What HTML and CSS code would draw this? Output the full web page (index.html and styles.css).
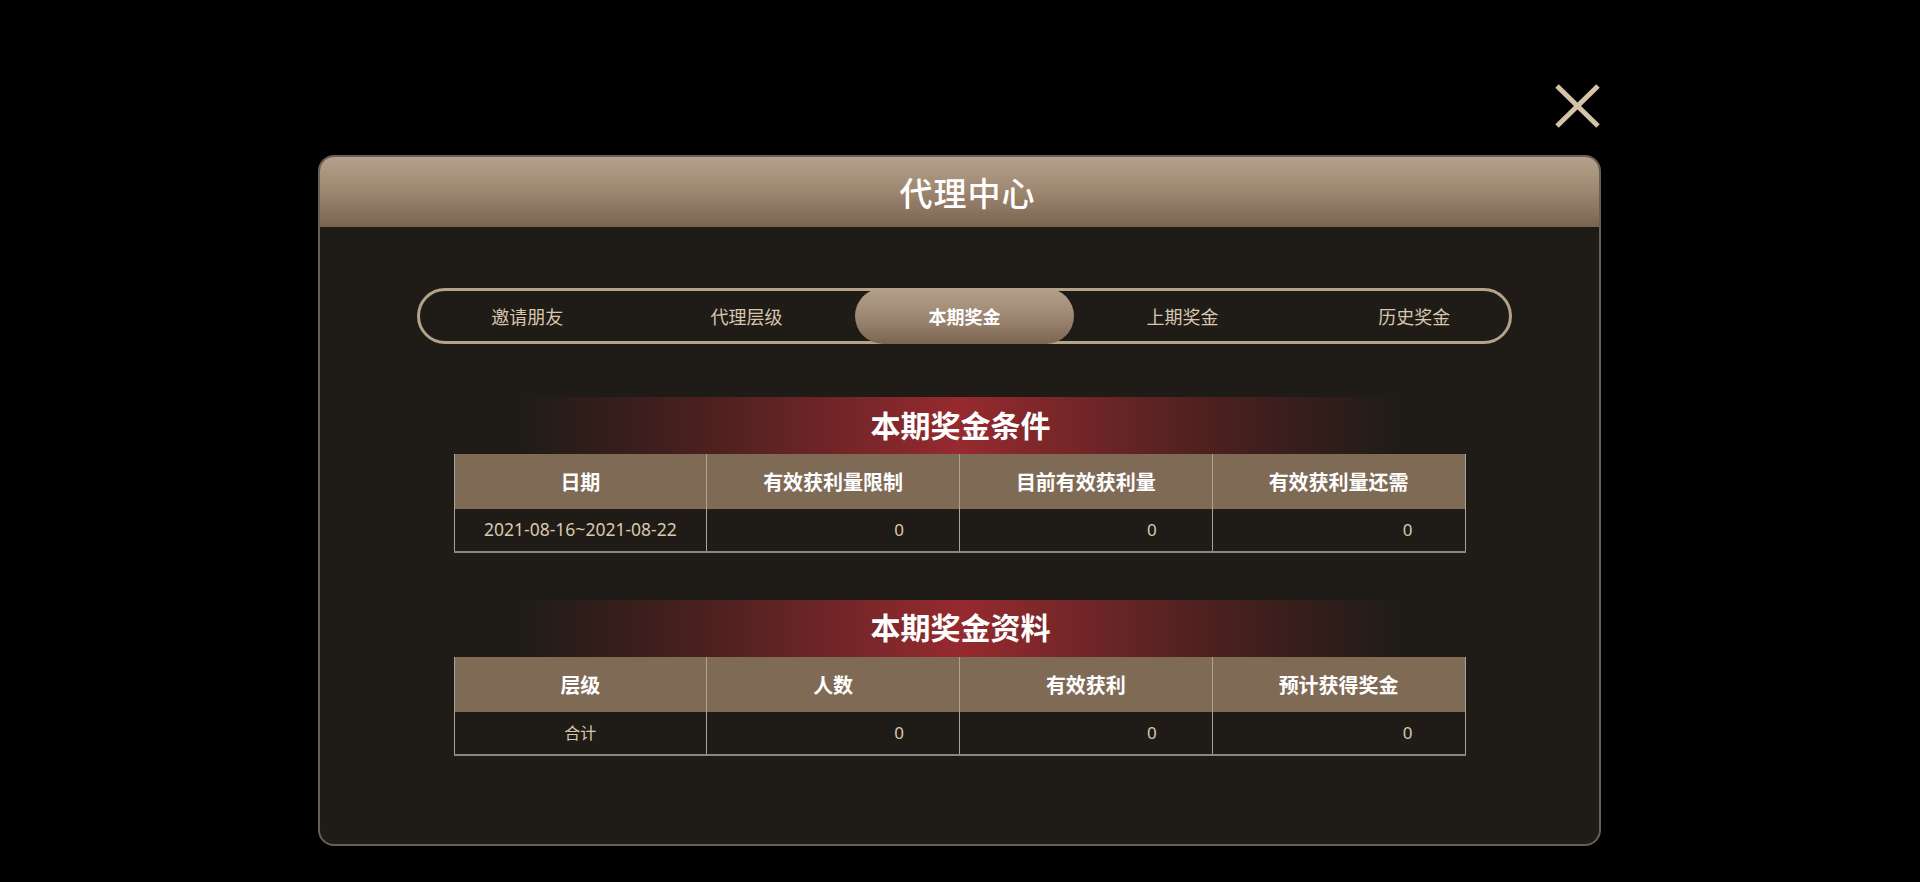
FILE: index.html
```html
<!DOCTYPE html>
<html lang="zh-CN">
<head>
<meta charset="utf-8">
<title>代理中心</title>
<link rel="stylesheet" href="styles.css">
</head>
<body>
<div class="page">
  <div class="modal">
    <button class="close" aria-label="关闭">
      <svg width="45" height="44" viewBox="0 0 45 44"><line x1="2" y1="2" x2="43" y2="42" stroke="#d4c3a8" stroke-width="5"/><line x1="43" y1="2" x2="2" y2="42" stroke="#d4c3a8" stroke-width="5"/></svg>
    </button>
    <div class="modal-head">代理中心</div>
    <div class="modal-body">
      <div class="tabs">
        <div class="tab">邀请朋友</div>
        <div class="tab">代理层级</div>
        <div class="tab active">本期奖金</div>
        <div class="tab">上期奖金</div>
        <div class="tab last">历史奖金</div>
      </div>

      <div class="section first">
        <div class="banner">本期奖金条件</div>
        <table class="grid">
          <thead>
            <tr><th>日期</th><th>有效获利量限制</th><th>目前有效获利量</th><th>有效获利量还需</th></tr>
          </thead>
          <tbody>
            <tr><td class="c">2021-08-16~2021-08-22</td><td>0</td><td>0</td><td class="r4">0</td></tr>
          </tbody>
        </table>
      </div>

      <div class="section second">
        <div class="banner">本期奖金资料</div>
        <table class="grid">
          <thead>
            <tr><th>层级</th><th>人数</th><th>有效获利</th><th>预计获得奖金</th></tr>
          </thead>
          <tbody>
            <tr><td class="c cjk">合计</td><td>0</td><td>0</td><td class="r4">0</td></tr>
          </tbody>
        </table>
      </div>
    </div>
  </div>
</div>
</body>
</html>
```

FILE: styles.css
```css
* { box-sizing: border-box; }
html, body { margin: 0; padding: 0; background: #000; }
body {
  width: 1920px;
  height: 882px;
  overflow: hidden;
  font-family: "Noto Sans CJK SC", "Noto Sans", sans-serif;
}
.page {
  padding-top: 155px;
  padding-left: 318px;
}
.modal {
  position: relative;
  width: 1283px;
  height: 691px;
  border: 2px solid #6a5f54;
  border-radius: 16px;
  background: #1f1c17;
}
.close {
  position: absolute;
  top: -73px;
  right: -1px;
  width: 45px;
  height: 44px;
  padding: 0;
  border: 0;
  background: transparent;
  display: block;
}
.close svg { display: block; }
.modal-head {
  height: 70px;
  border-radius: 14px 14px 0 0;
  background: linear-gradient(180deg, #b4a18b 0%, #9d8670 50%, #7a6450 100%);
  color: #fff;
  font-size: 33px;
  font-weight: 500;
  display: flex;
  align-items: center;
  justify-content: center;
  padding-top: 0;
  padding-left: 16px;
  letter-spacing: 1px;
}
.modal-body {
  padding-top: 61px;
}
.tabs {
  display: flex;
  width: 1095px;
  height: 56px;
  margin-left: 97px;
  border: 3px solid #b5a28b;
  border-radius: 28px;
}
.tab {
  width: 218px;
  display: flex;
  align-items: center;
  justify-content: center;
  color: #d8c6ad;
  font-size: 18px;
}
.tab:first-child {
  padding-right: 3px;
}
.tab.active {
  width: 219px;
  margin: -3px 0;
  border-radius: 28px;
  background: linear-gradient(180deg, #b4a18b 0%, #9c8570 55%, #7b6551 100%);
  color: #fff;
  font-weight: 700;
}
.tab.last {
  padding-left: 28px;
}
.section.first { margin-top: 53px; }
.section.second { margin-top: 47px; }
.banner {
  width: 874px;
  height: 57px;
  margin: 0 auto;
  background: linear-gradient(90deg, rgba(150, 40, 46, 0) 0%, rgba(150, 40, 46, 0.35) 20%, #962a2f 50%, rgba(150, 40, 46, 0.35) 80%, rgba(150, 40, 46, 0) 100%);
  color: #fff;
  font-size: 30px;
  font-weight: 700;
  display: flex;
  align-items: center;
  justify-content: center;
  padding-bottom: 3px;
  padding-left: 2px;
}
.section.second .banner {
  padding-bottom: 6px;
}
.grid {
  width: 1012px;
  margin: 0 auto;
  border-collapse: collapse;
  table-layout: fixed;
}
.grid th {
  height: 55px;
  background: #7f6a55;
  color: #fff;
  font-size: 20px;
  font-weight: 700;
  text-align: center;
  border-left: 1px solid #a9a39a;
  border-right: 1px solid #a9a39a;
  padding: 0;
}
.grid td {
  height: 43px;
  color: #dac8ad;
  font-family: "Noto Sans", "Noto Sans CJK SC", sans-serif;
  font-size: 17px;
  text-align: right;
  padding: 0 55px 2px 0;
  border-left: 1px solid #a9a39a;
  border-right: 1px solid #a9a39a;
  border-bottom: 2px solid #8a857d;
}
.grid td.r4 {
  padding-right: 52px;
}
.grid td.c {
  text-align: center;
  padding: 0 0 2px 0;
  font-size: 17.5px;
}
.grid td.cjk {
  font-family: "Noto Sans CJK SC", sans-serif;
  font-size: 16px;
}
```
